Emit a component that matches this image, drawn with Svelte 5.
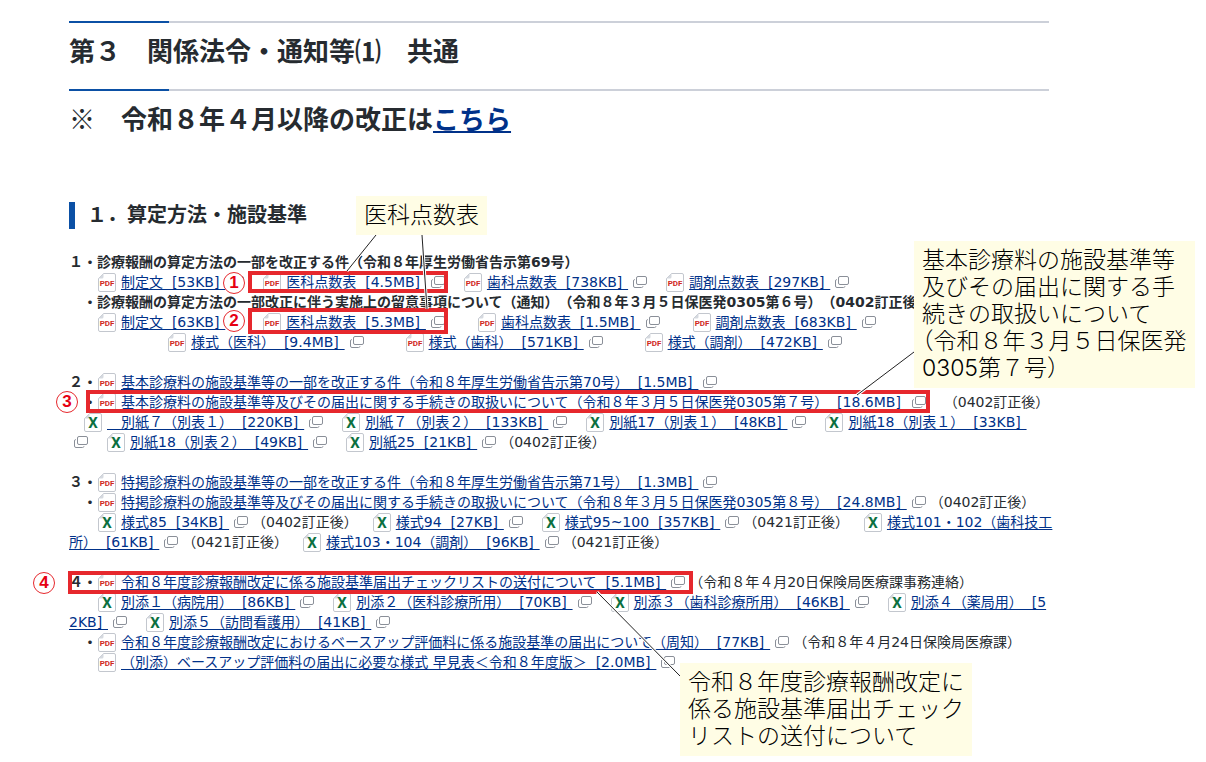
<script>
    // a string is plain text, an object is a file link
    const pdf = (name, size) => ({ "kind": "pdf", name, size });
    const xls = (name, size, wrapIcon = false) => ({ "kind": "xls", name, size, wrapIcon });
    const bold = (text) => ({ "kind": "bold", text });

    const groups = [
        [
            [bold("１・診療報酬の算定方法の一部を改正する件（令和８年厚生労働省告示第69号）")],
            ["　　", pdf("制定文", "53KB"), "　", pdf("医科点数表", "4.5MB"), "　", pdf("歯科点数表", "738KB"), "　", pdf("調剤点数表", "297KB")],
            [bold("　・診療報酬の算定方法の一部改正に伴う実施上の留意事項について（通知）（令和８年３月５日保医発0305第６号）（0402訂正後）")],
            ["　　", pdf("制定文", "63KB"), "　", pdf("医科点数表", "5.3MB"), "　　", pdf("歯科点数表", "1.5MB"), "　　", pdf("調剤点数表", "683KB")],
            ["　　　　　　　", pdf("様式（医科）", "9.4MB"), "　　  ", pdf("様式（歯科）", "571KB"), "　　  ", pdf("様式（調剤）", "472KB")],
        ],
        [
            [bold("２・"), pdf("基本診療料の施設基準等の一部を改正する件（令和８年厚生労働省告示第70号）", "1.5MB")],
            [bold("　・"), pdf("基本診療料の施設基準等及びその届出に関する手続きの取扱いについて（令和８年３月５日保医発0305第７号）", "18.6MB"), "　（0402訂正後）"],
            ["　", xls("　別紙７（別表１）", "220KB"), "　", xls("別紙７（別表２）", "133KB"), "　", xls("別紙17（別表１）", "48KB"), "　", xls("別紙18（別表１）", "33KB", true), "　", xls("別紙18（別表２）", "49KB"), "　", xls("別紙25", "21KB"), "（0402訂正後）"],
        ],
        [
            [bold("３・"), pdf("特掲診療料の施設基準等の一部を改正する件（令和８年厚生労働省告示第71号）", "1.3MB")],
            [bold("　・"), pdf("特掲診療料の施設基準等及びその届出に関する手続きの取扱いについて（令和８年３月５日保医発0305第８号）", "24.8MB"), "（0402訂正後）"],
            ["　　", xls("様式85", "34KB"), "（0402訂正後）　", xls("様式94", "27KB"), "　", xls("様式95~100", "357KB"), "（0421訂正後）　", xls("様式101・102（歯科技工\n所）", "61KB"), "（0421訂正後）　", xls("様式103・104（調剤）", "96KB"), "（0421訂正後）"],
        ],
        [
            [bold("４・"), pdf("令和８年度診療報酬改定に係る施設基準届出チェックリストの送付について", "5.1MB"), "（令和８年４月20日保険局医療課事務連絡）"],
            ["　　", xls("別添１（病院用）", "86KB"), "　", xls("別添２（医科診療所用）", "70KB"), "　", xls("別添３（歯科診療所用）", "46KB"), "　", xls("別添４（薬局用）", "5\n2KB"), "　", xls("別添５（訪問看護用）", "41KB")],
            [bold("　・"), pdf("令和８年度診療報酬改定におけるベースアップ評価料に係る施設基準の届出について（周知）", "77KB"), "（令和８年４月24日保険局医療課）"],
            ["　　", pdf("（別添）ベースアップ評価料の届出に必要な様式 早見表＜令和８年度版＞", "2.0MB")],
        ],
    ];

    // annotations lie freely over the page
    const frames = [
        { x: 248, y: 271, w: 200, h: 22 },
        { x: 248, y: 308, w: 200, h: 26 },
        { x: 86, y: 390, w: 844, h: 23 },
        { x: 68, y: 571, w: 625, h: 23 },
    ];

    const badges = [
        { x: 223, y: 272 },
        { x: 223, y: 310 },
        { x: 56, y: 391 },
        { x: 33, y: 572 },
    ];

    const pointers = [
        [376, 235, 347, 271],
        [422, 235, 427, 309],
        [914, 352, 857, 395],
        [597, 592, 680, 676],
    ];

    const notes = [
        { x: 356, y: 196, lines: ["医科点数表"] },
        { x: 914, y: 241, lines: ["基本診療料の施設基準等", "及びその届出に関する手", "続きの取扱いについて", "（令和８年３月５日保医発", "0305第７号）"] },
        { x: 680, y: 663, lines: ["令和８年度診療報酬改定に", "係る施設基準届出チェック", "リストの送付について"] },
    ];
</script>

{#snippet fileIcon(kind)}<svg class="file" viewBox="0 0 18 20" aria-hidden="true"><path d="M5.5 1.5H16a1.5 1.5 0 0 1 1.5 1.5V18a1.5 1.5 0 0 1-1.5 1.5H2A1.5 1.5 0 0 1 .5 18V6.5z" fill="#fff" stroke="#c3c7ce" /><path d="M5.5 1.5V5A1.5 1.5 0 0 1 4 6.5H.5z" fill="#d5d9df" />{#if kind === "pdf"}<text x="9" y="14" class="pdfMark">PDF</text>{:else}<text x="9" y="16" class="xlsMark">X</text>{/if}</svg>{/snippet}

{#snippet windowIcon()}<svg class="window" viewBox="0 0 14 20" aria-hidden="true"><rect x="3.5" y="4.5" width="10" height="8" rx="1.5" /><path d="M1.8 7.5Q.5 7.7 .5 9v5q0 1.5 1.5 1.5h6.5q1.3 0 1.5-1.2" /></svg>{/snippet}

<main>
    <h1>第３　関係法令・通知等⑴　共通</h1>
    <h2 class="notice">※　令和８年４月以降の改正は<a href="#latest">こちら</a></h2>

    <h3>１．算定方法・施設基準</h3>

    {#each groups as group}
        <div class="group">
            {#each group as line}
                <p>{#each line as part}{#if typeof part === "string"}{part}{:else if part.kind === "bold"}<strong>{part.text}</strong>{:else}{@render fileIcon(part.kind)}<a href="#file">{part.name}&nbsp;&nbsp;[{part.size}]&nbsp;&hairsp;</a>{#if part.wrapIcon}<br>{/if}{@render windowIcon()}{/if}{/each}</p>
            {/each}
        </div>
    {/each}

    {#each frames as f}
        <div class="frame" style="left: {f.x}px; top: {f.y}px; width: {f.w}px; height: {f.h}px"></div>
    {/each}

    {#each badges as b, i}
        <span class="badge" style="left: {b.x}px; top: {b.y}px">{i + 1}</span>
    {/each}

    <svg class="pointers" aria-hidden="true">
        {#each pointers as [x1, y1, x2, y2]}
            <line class="halo" {x1} {y1} {x2} {y2} />
            <line {x1} {y1} {x2} {y2} />
        {/each}
    </svg>

    {#each notes as note}
        <aside style="left: {note.x}px; top: {note.y}px">
            {#each note.lines as text}
                <div>{text}</div>
            {/each}
        </aside>
    {/each}
</main>

<style>
    :global(body) {
        margin: 0;
        background: #fff;
    }

    main {
        position: relative;
        box-sizing: border-box;
        min-height: 100vh;
        padding: 21px 157px 0 69px;
        color: #262b30;
        font-family: "DejaVu Sans", "Noto Sans CJK JP", sans-serif;
        font-size: 14px;
        line-height: 20px;
        text-spacing-trim: space-all;
    }

    h1, h2, h3, p {
        margin: 0;
    }

    h1, h2 {
        border-top: 2px solid #ccd0d9;
        border-image: linear-gradient(to right, #0b50a5 102px, #ccd0d9 102px) 2;
        font-family: "Noto Sans CJK JP", sans-serif;
        font-size: 26px;
        line-height: 36px;
        white-space: nowrap;
    }

    h1 {
        padding: 9px 0 21px;
    }

    .notice {
        padding: 9px 0 66px;
    }

    h3 {
        margin-bottom: 23px;
        padding: 0 0 4px 12px;
        border-left: 6px solid #0b50a5;
        font-family: "Noto Sans CJK JP", sans-serif;
        font-size: 20px;
        line-height: 23px;
    }

    a {
        color: #003189;
        text-decoration: underline;
        text-underline-offset: 2px;
    }

    .group {
        margin-bottom: 20px;
    }

    p {
        white-space: pre;
    }

    svg {
        fill: none;
        vertical-align: top;
    }

    .file {
        width: 18px;
        height: 20px;
        margin: 0 5px 0 1px;
    }

    .pdfMark, .xlsMark {
        font-family: Roboto, "Liberation Sans", sans-serif;
        font-weight: bold;
        text-anchor: middle;
    }

    .pdfMark {
        fill: #d0281e;
        font-size: 8px;
    }

    .xlsMark {
        fill: #0b7040;
        font-size: 15px;
    }

    .window {
        width: 14px;
        height: 20px;
        margin: 0 4px 0 5px;
        stroke: #8a8f98;
    }

    .frame {
        position: absolute;
        box-sizing: border-box;
        border: 4px solid #e6282d;
    }

    .badge {
        position: absolute;
        box-sizing: border-box;
        width: 22px;
        height: 22px;
        border: 1px solid #e6282d;
        border-radius: 50%;
        background: #fff;
        color: #e60012;
        font: bold 17px/20px "Liberation Sans", sans-serif;
        text-align: center;
    }

    .pointers {
        position: absolute;
        top: 0;
        left: 0;
        width: 100%;
        height: 100%;
        stroke: #222;
        pointer-events: none;
    }

    .halo {
        stroke: #fff;
        stroke-width: 3px;
    }

    aside {
        position: absolute;
        padding: 6px 8px;
        background: #fffde5;
        color: #000;
        font-family: Inter, "Noto Sans CJK JP", sans-serif;
        font-weight: 300;
        font-size: 23px;
        line-height: 27px;
        white-space: nowrap;
        text-spacing-trim: trim-start;
    }
</style>
